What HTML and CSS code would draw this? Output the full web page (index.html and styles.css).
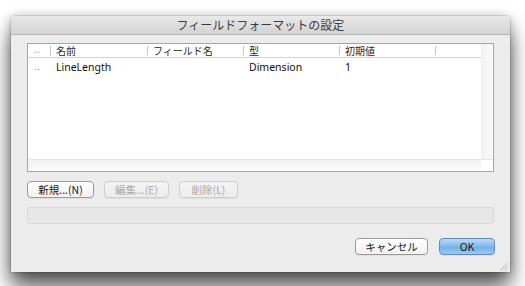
FILE: index.html
```html
<!DOCTYPE html>
<html lang="ja">
<head>
<meta charset="utf-8">
<link rel="stylesheet" href="styles.css">
</head>
<body>
<div class="window">
  <div class="titlebar">フィールドフォーマットの設定</div>
  <div class="content">
    <div class="table">
      <div class="table-main">
        <div class="grid">
          <div class="row header">
            <div class="cell c0">..</div>
            <div class="cell c1">名前</div>
            <div class="cell c2">フィールド名</div>
            <div class="cell c3">型</div>
            <div class="cell c4">初期値</div>
            <div class="cell c5"></div>
          </div>
          <div class="row data">
            <div class="cell c0">..</div>
            <div class="cell c1">LineLength</div>
            <div class="cell c2"></div>
            <div class="cell c3">Dimension</div>
            <div class="cell c4">1</div>
            <div class="cell c5"></div>
          </div>
        </div>
        <div class="vscroll"></div>
      </div>
      <div class="hscroll"><div class="corner"></div></div>
    </div>
    <div class="actions">
      <button class="btn">新規...(N)</button>
      <button class="btn disabled w-edit">編集...(E)</button>
      <button class="btn disabled w-del">削除(L)</button>
    </div>
    <div class="field"></div>
    <div class="footer">
      <button class="btn cancel">キャンセル</button>
      <button class="btn ok">OK</button>
    </div>
  </div>
  <div class="grip">
    <svg width="9" height="9" viewBox="0 0 9 9"><path d="M8.5 1.5 L1.5 8.5 M8.5 4.5 L4.5 8.5 M8.5 7.5 L7.5 8.5" stroke="#a8a8a8" stroke-width="0.8" fill="none"/></svg>
  </div>
</div>
</body>
</html>
```

FILE: styles.css
```css
html, body {
  margin: 0;
  padding: 0;
  width: 525px;
  height: 286px;
  overflow: hidden;
  background: #ffffff;
  font-family: "Noto Sans", "Noto Sans CJK JP", sans-serif;
}

.window {
  position: relative;
  margin: 16px 0 0 11px;
  width: 499px;
  height: 256px;
  background: #ececec;
  box-shadow: 0 16px 22px 0 rgba(0, 0, 0, 0.62), 0 2px 12px rgba(0, 0, 0, 0.3), 0 0 0 1px rgba(0, 0, 0, 0.1);
  border-radius: 4px 4px 0 0;
  display: flex;
  flex-direction: column;
}

.titlebar {
  height: 18px;
  flex: none;
  border-radius: 4px 4px 0 0;
  background: linear-gradient(#e9e9e9, #d3d3d3);
  border-bottom: 1px solid #b5b5b5;
  text-align: center;
  font-family: "Noto Sans CJK JP", sans-serif;
  font-size: 12px;
  line-height: 18px;
  color: #3c3c3c;
}

.content {
  padding: 8px 15px 0 16px;
  display: flex;
  flex-direction: column;
}

.table {
  width: 465px;
  height: 127px;
  border: 1px solid #a6a6a6;
  background: #fff;
  display: flex;
  flex-direction: column;
}

.table-main {
  flex: 1;
  display: flex;
  min-height: 0;
}

.grid {
  flex: 1;
}

.vscroll {
  width: 11px;
  background: linear-gradient(90deg, #f2f2f2, #fafafa);
  border-left: 1px solid #ececec;
}

.hscroll {
  height: 11px;
  background: linear-gradient(#f1f1f1, #fafafa);
  border-top: 1px solid #e6e6e6;
  display: flex;
  justify-content: flex-end;
}

.corner {
  width: 12px;
  background: #fff;
}

.row {
  display: flex;
  color: #1a1a1a;
}

.header {
  height: 13px;
  border-bottom: 1px solid #d4d4d4;
  font-family: "Noto Sans CJK JP", sans-serif;
  font-size: 10px;
  line-height: 13px;
  color: #2a2a2a;
}

.header .cell {
  position: relative;
}

.header .cell::after {
  content: "";
  position: absolute;
  right: 0;
  top: 2px;
  height: 9px;
  width: 1px;
  background: #c6c6c6;
}

.header .c5::after {
  display: none;
}

.data {
  height: 18px;
  font-size: 10.5px;
  line-height: 18px;
  color: #111;
}

.cell {
  padding-left: 5px;
  white-space: nowrap;
  overflow: hidden;
  box-sizing: border-box;
}

.row .c0 {
  width: 23px;
  padding-left: 6px;
  color: #777;
  font-family: "DejaVu Sans", sans-serif;
  font-size: 9px;
  letter-spacing: 0.5px;
}

.c1 { width: 97px; }
.c2 { width: 96px; }
.c3 { width: 96px; }
.c4 { width: 96px; }
.c5 { flex: 1; }

.actions {
  display: flex;
  gap: 10px;
  margin-top: 9px;
}

.btn {
  box-sizing: border-box;
  height: 17px;
  padding: 0;
  border: 1px solid #9b9b9b;
  border-radius: 4px;
  background: linear-gradient(#ffffff, #f1f1f1);
  font-family: "Noto Sans CJK JP", sans-serif;
  font-size: 10.5px;
  line-height: 15px;
  color: #1a1a1a;
  width: 67px;
  box-shadow: 0 1px 0 rgba(0, 0, 0, 0.05);
}

.btn.disabled {
  border-color: #cdcdcd;
  color: #a9a9a9;
  background: linear-gradient(#f4f4f4, #ececec);
}

.w-edit { width: 65px; }
.w-del { width: 59px; }

.field {
  margin-top: 9px;
  height: 17px;
  box-sizing: border-box;
  border: 1px solid #d8d8d8;
  border-radius: 3px;
  background: #e7e7e7;
  width: 467px;
}

.footer {
  display: flex;
  justify-content: flex-end;
  gap: 11px;
  margin-top: 14px;
}

.cancel {
  width: 73px;
}

.ok {
  width: 56px;
  border-color: #5f8bc6;
  background: linear-gradient(#bcd9f7, #82b8ee 50%, #72acea 51%, #9dc9f3);
  color: #111;
}

.grip {
  position: absolute;
  right: 2px;
  bottom: 1px;
  width: 9px;
  height: 9px;
  line-height: 0;
}
```
